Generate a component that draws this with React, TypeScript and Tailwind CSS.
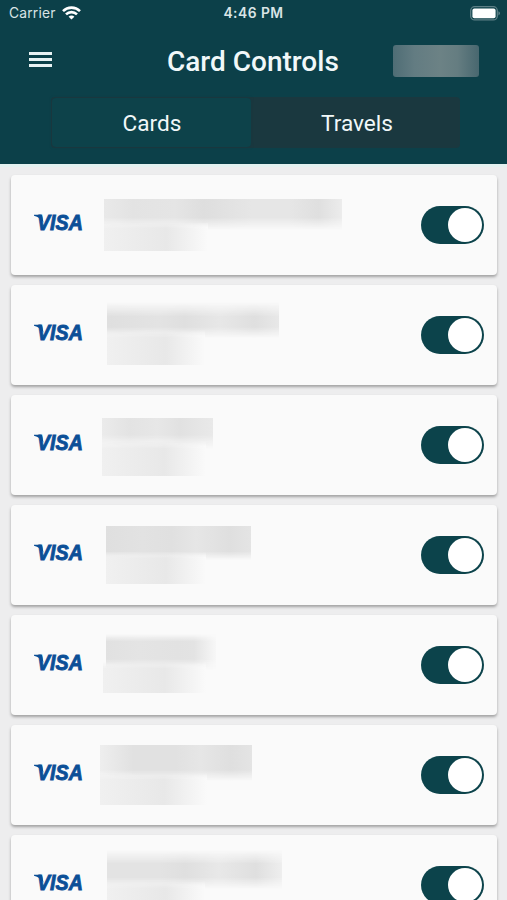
import { useState } from "react";

interface CardRow {
  id: number;
  // classes for the two masked lines: card name and card number
  offset: string;
  name: string;
  number: string;
}

const CARDS: CardRow[] = [
  {
    id: 1,
    offset: "ml-[20px] mt-[24px]",
    name: "h-[31px] w-[238px] bg-[linear-gradient(to_right,#e9e9e9,#e3e3e3_12%,#e5e5e5_30%,#dedede_42%,#e6e6e6_62%,#e6e6e6_78%,#dfdfdf_90%,#ececec)] mask-b-from-60%",
    number: "-mt-[8px] h-[29px] w-[104px]",
  },
  {
    id: 2,
    offset: "ml-[23px] mt-[17px]",
    name: "h-[36px] w-[172px] bg-[linear-gradient(to_right,#dfdfdf,#e3e3e3_30%,#dfdfdf_45%,#e7e7e7_66%,#dfdfdf_86%,#e8e8e8)] mask-t-from-60% mask-b-from-70%",
    number: "-mt-[8px] h-[35px] w-[98px]",
  },
  {
    id: 3,
    offset: "ml-[18px] mt-[23px]",
    name: "h-[31px] w-[111px] bg-[linear-gradient(to_right,#ebebeb,#e3e3e3_25%,#e7e7e7_50%,#e1e1e1_70%,#e9e9e9)] mask-b-from-55%",
    number: "-mt-[8px] h-[35px] w-[104px]",
  },
  {
    id: 4,
    offset: "ml-[22px] mt-[21px]",
    name: "h-[34px] w-[145px] bg-[linear-gradient(to_right,#dfdfdf,#e2e2e2_25%,#e0e0e0_45%,#e6e6e6_62%,#dfdfdf_85%,#e4e4e4)] mask-b-from-75%",
    number: "-mt-[8px] h-[32px] w-[100px]",
  },
  {
    id: 5,
    offset: "ml-[22px] mt-[19px]",
    name: "h-[36px] w-[110px] bg-[linear-gradient(to_right,#e1e1e1,#e4e4e4_30%,#e2e2e2_65%,#e3e3e3_80%,#f7f7f7)] mask-t-from-80% mask-b-from-70%",
    number: "-ml-[3px] -mt-[8px] h-[31px] w-[103px]",
  },
  {
    id: 6,
    offset: "ml-[16px] mt-[20px]",
    name: "h-[36px] w-[152px] bg-[linear-gradient(to_right,#eeeeee,#e1e1e1_22%,#e1e1e1_50%,#e6e6e6_66%,#dfdfdf_86%,#e4e4e4)] mask-b-from-70%",
    number: "-mt-[8px] h-[32px] w-[107px]",
  },
  {
    id: 7,
    offset: "ml-[23px] mt-[15px]",
    name: "h-[39px] w-[175px] bg-[linear-gradient(to_right,#e3e3e3,#e3e3e3_30%,#dfdfdf_45%,#e8e8e8_64%,#dfdfdf_85%,#eeeeee)] mask-t-from-65% mask-b-from-70%",
    number: "-mt-[8px] h-[34px] w-[98px]",
  },
];

function StatusBar() {
  return (
    <div className="grid h-7 grid-cols-3 items-center px-[6px] font-['Inter',sans-serif] leading-none text-[#d9e4e6]">
      <div className="flex items-center gap-[6px] pl-[3px]">
        <span className="text-[13.8px] tracking-[0.2px]">Carrier</span>
        <svg width="19" height="14" viewBox="0 0 19 14" fill="none" stroke="white" strokeWidth="2.6" className="-mt-[2px]">
          <path d="M1 5.1A12.2 12.2 0 0 1 18 5.1" />
          <path d="M4 8.4A7.8 7.8 0 0 1 15 8.4" />
          <path d="M9.5 13.6 6.6 10.7A4 4 0 0 1 12.4 10.7Z" fill="white" stroke="none" />
        </svg>
      </div>
      <span className="whitespace-nowrap text-center text-[13.8px] font-semibold tracking-[0.5px]">4:46 PM</span>
      <div className="flex items-center justify-end">
        <svg width="31" height="15" viewBox="0 0 31 15" className="-mt-[2px]">
          <rect x="0.7" y="0.7" width="26.6" height="13.2" rx="4" fill="none" stroke="#5d7f86" strokeWidth="1.3" />
          <rect x="2.4" y="2.4" width="23.2" height="9.8" rx="2" fill="white" />
          <path d="M28.4 5.2Q30 5.8 30 7.3T28.4 9.4Z" fill="#5d7f86" />
        </svg>
      </div>
    </div>
  );
}

function VisaLogo() {
  return (
    <svg
      width="51"
      height="32"
      viewBox="0 -7 51 32"
      className="ml-[22px] mt-[31px] shrink-0 overflow-visible"
      aria-label="Visa"
    >
      <path d="M1 1.7H7.6Q9 1.7 9.3 3.4L10.4 9.4Q7.2 4.4 1 2.7Z" fill="#0b4f97" />
      <text
        x="4"
        y="17.3"
        textLength="45.8"
        lengthAdjust="spacingAndGlyphs"
        className="font-['Liberation_Sans',sans-serif] text-[21.2px] font-bold italic"
        fill="#0b4f97"
        stroke="#0b4f97"
        strokeWidth="0.9"
      >
        VISA
      </text>
    </svg>
  );
}

interface ToggleProps {
  checked: boolean;
  onChange: () => void;
}

function Toggle({ checked, onChange }: ToggleProps) {
  return (
    <button
      role="switch"
      aria-checked={checked}
      onClick={onChange}
      className={`mr-[13px] mt-[31px] flex h-[38px] w-[63px] shrink-0 items-center rounded-full px-[2px] ${
        checked ? "justify-end bg-[#0c434b]" : "justify-start bg-gray-300"
      }`}
    >
      <span className="size-[34px] rounded-full bg-white" />
    </button>
  );
}

export default function App() {
  const [tab, setTab] = useState("Cards");
  const [disabled, setDisabled] = useState<number[]>([]);

  const toggleCard = (id: number) => {
    setDisabled((prev) => (prev.includes(id) ? prev.filter((x) => x !== id) : [...prev, id]));
  };

  return (
    <div className="flex h-[900px] w-[507px] flex-col overflow-hidden bg-[#ededee] font-['Roboto',sans-serif]">
      <header className="h-[164px] shrink-0 bg-[#0c4049] text-[#f1f8f9]">
        <StatusBar />

        <div className="flex h-[69px] items-start">
          <button aria-label="Menu" className="ml-[29px] mt-[24px] flex w-[23px] flex-col gap-[3px]">
            <span className="h-[3px] bg-[#e8f2f3]" />
            <span className="h-[3px] bg-[#e8f2f3]" />
            <span className="h-[3px] bg-[#e8f2f3]" />
          </button>
          <h1 className="ml-[115px] mt-[17px] w-[172px] whitespace-nowrap text-[28px] font-medium leading-[34px]">
            Card Controls
          </h1>
          <div className="ml-[54px] mt-[17px] h-[32px] w-[86px] rounded-[3px] bg-[linear-gradient(to_right,#4f6d75,#637c82_25%,#6c8285_55%,#657d81_75%,#48676f)]" />
        </div>

        <div className="ml-[51px] flex h-[51px] w-[409px] gap-[3px] rounded-[4px] bg-[#1a383f] p-px">
          {["Cards", "Travels"].map((name) => (
            <button
              key={name}
              onClick={() => setTab(name)}
              className={`rounded-[4px] pl-px pt-[3px] text-[22.6px] leading-none ${
                name === "Cards" ? "w-[199px]" : "flex-1"
              } ${tab === name ? "bg-[#0d424a] shadow-[0_0_3px_#1a383f]" : ""}`}
            >
              {name}
            </button>
          ))}
        </div>
      </header>

      <div className="h-[3px] shrink-0 bg-[#e4f1f0]" />

      <main className="flex flex-col gap-[10px] pl-[11px] pr-[10px] pt-[8px]">
        {CARDS.map((card) => (
          <section
            key={card.id}
            className="flex h-[100px] shrink-0 items-start rounded-[4px] bg-[#fafafa] shadow-[0_2px_3px_rgba(0,0,0,0.32)]"
          >
            <VisaLogo />
            <div className={`flex-1 ${card.offset}`}>
              <div className={card.name} />
              <div
                className={`bg-linear-to-r from-[#f0f0f0] via-[#e8e8e8] via-60% to-[#fafafa] mask-t-from-80% ${card.number}`}
              />
            </div>
            <Toggle checked={!disabled.includes(card.id)} onChange={() => toggleCard(card.id)} />
          </section>
        ))}
      </main>
    </div>
  );
}
